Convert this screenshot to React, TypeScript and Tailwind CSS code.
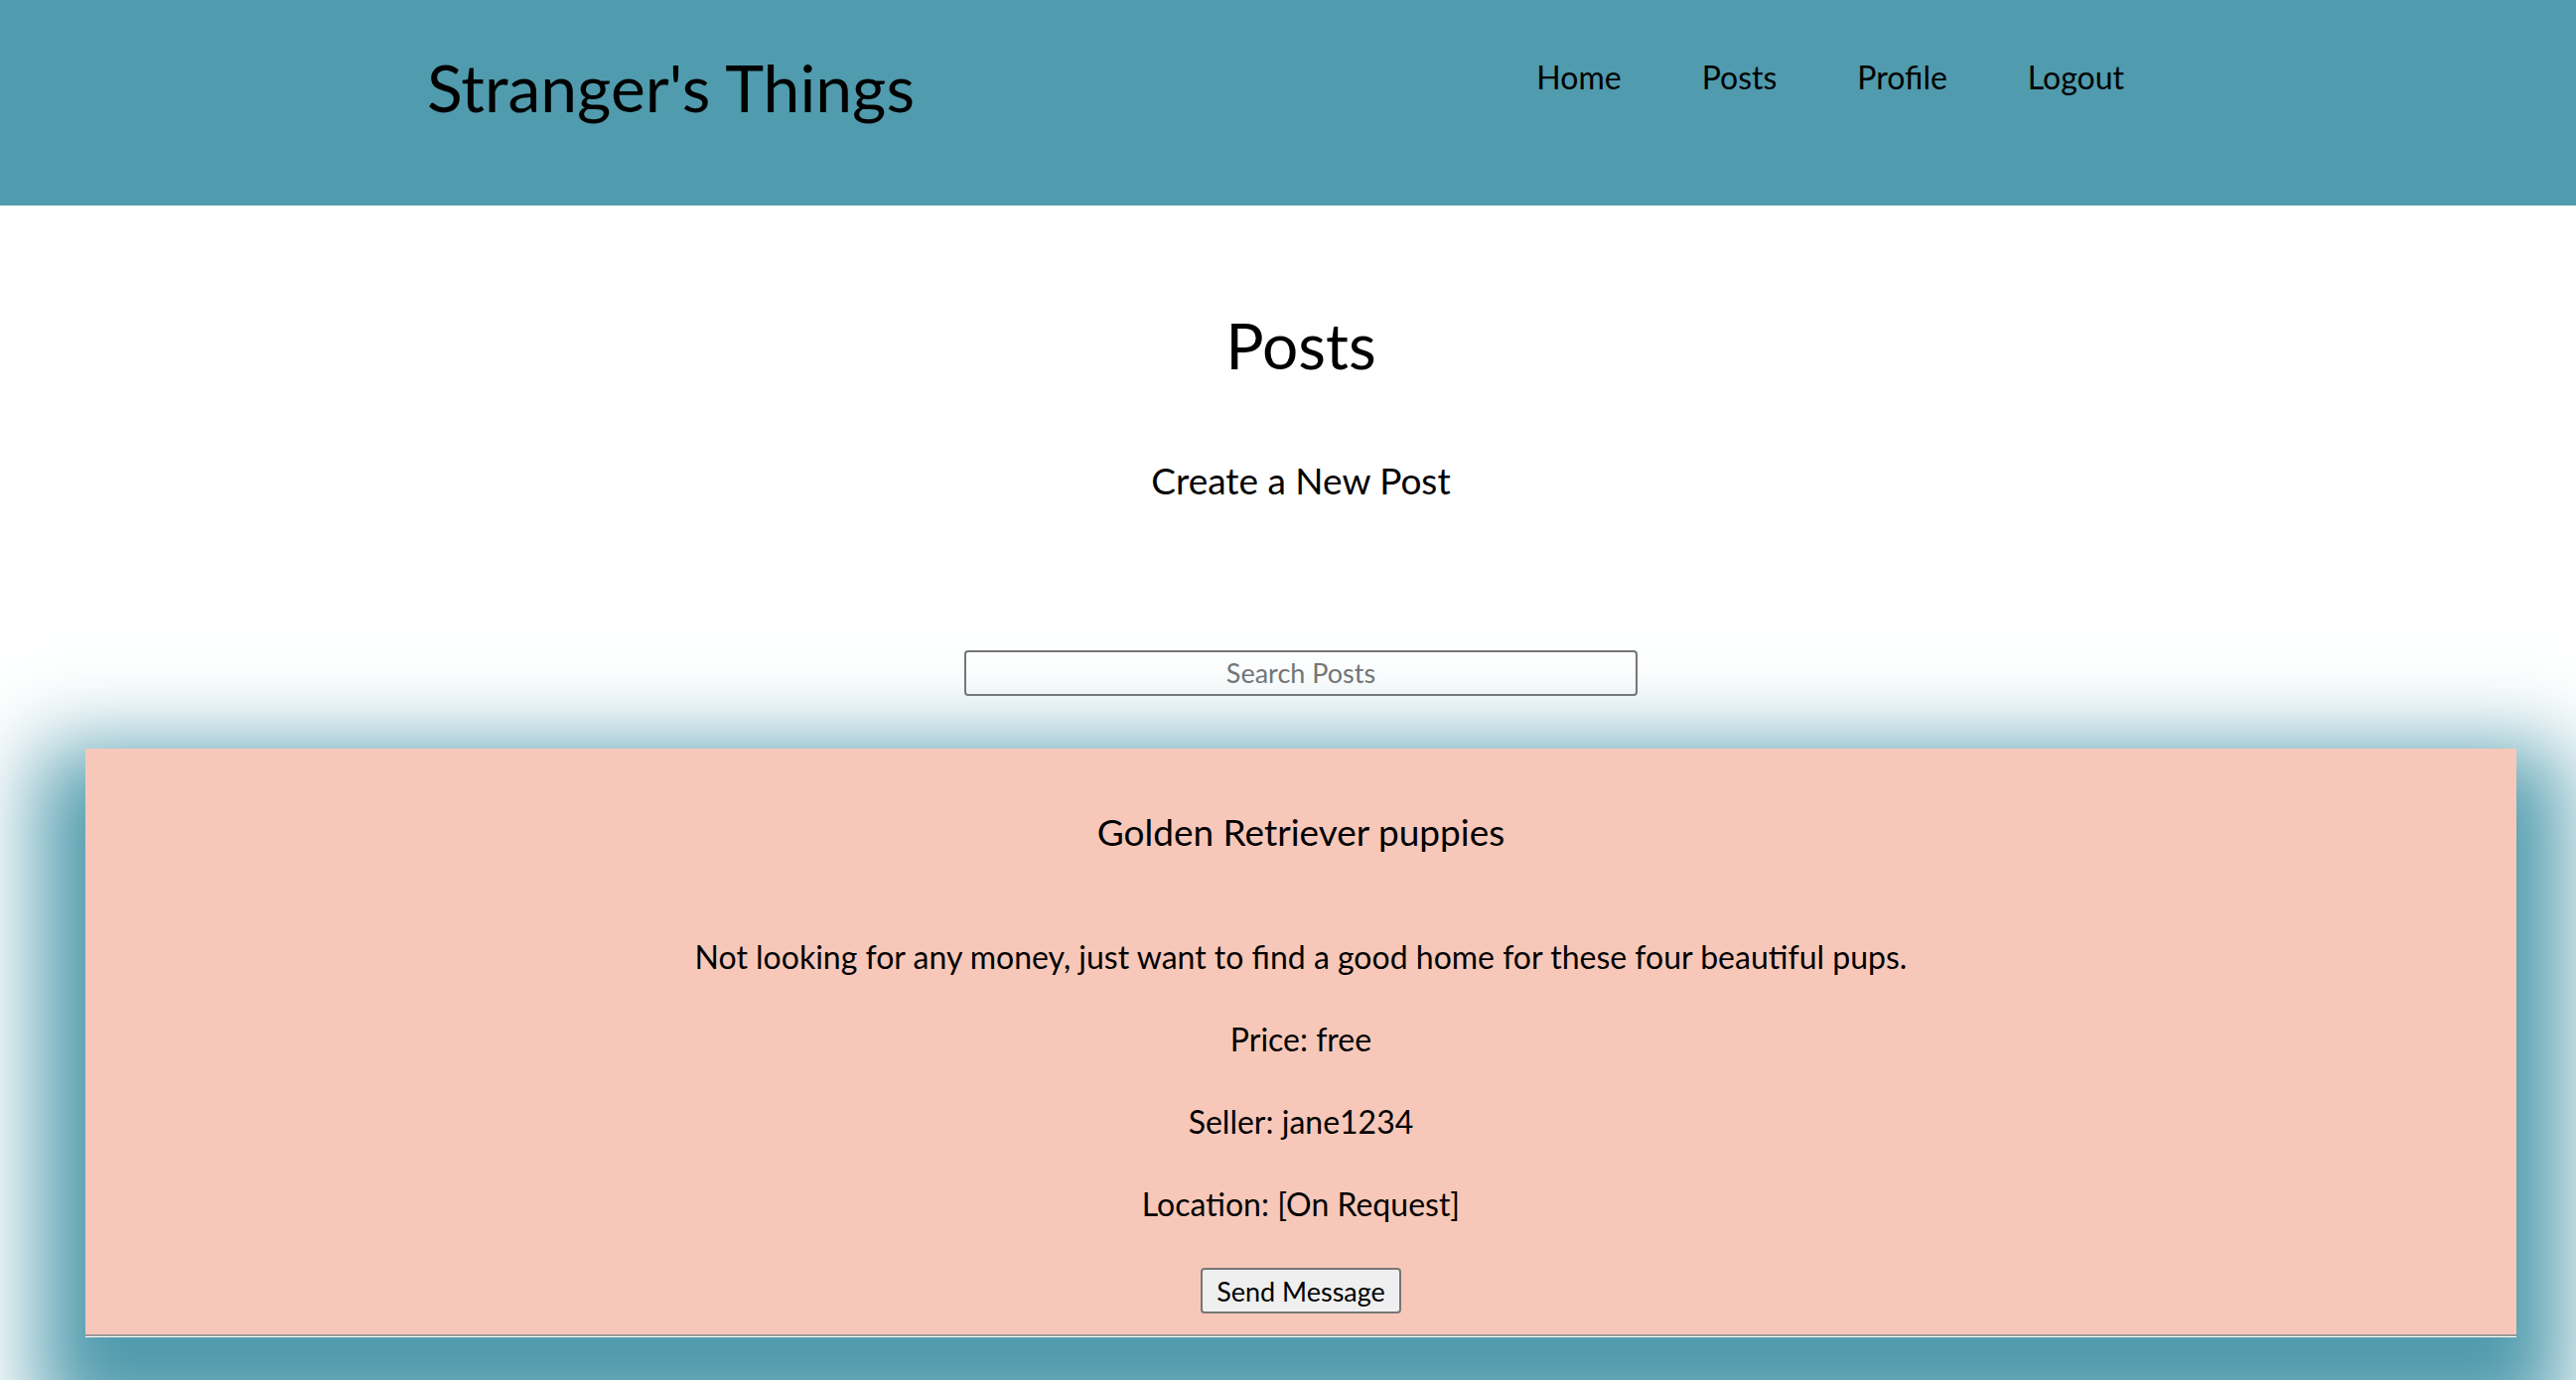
const NAV = ["Home", "Posts", "Profile", "Logout"];

const post = {
  title: "Golden Retriever puppies",
  description:
    "Not looking for any money, just want to find a good home for these four beautiful pups.",
  price: "free",
  seller: "jane1234",
  location: "[On Request]",
};

function Header() {
  return (
    <header className="h-[207px] bg-[#509bad] flex justify-between items-start pl-[430px] pr-[455px]">
      <h1 className="mt-[55px] text-[66px] leading-none font-normal">Stranger's Things</h1>
      <nav className="mt-[62px] flex gap-[81px] text-[32px] leading-none">
        {NAV.map((label) => (
          <a key={label} href="#" className="text-black">
            {label}
          </a>
        ))}
      </nav>
    </header>
  );
}

function PostCard() {
  return (
    <div className="mt-[53px] w-[2448px] bg-[#f7c8b9] shadow-[0_48px_80px_48px_#509bad] flex flex-col items-center pt-[65px]">
      <h3 className="text-[37px] leading-none font-normal">{post.title}</h3>
      <div className="mt-[92px] flex flex-col items-center gap-[51px] text-[32px] leading-none">
        <p>{post.description}</p>
        <p>Price: {post.price}</p>
        <p>Seller: {post.seller}</p>
        <p>Location: {post.location}</p>
      </div>
      <button className="mt-[48px] h-[46px] px-[14px] bg-[#efefef] border-2 border-[#767676] rounded-[4px] text-[27px] leading-none">
        Send Message
      </button>
      <div className="self-stretch mt-[21px] border-t-2 border-t-[#9a9a9a] border-b border-b-white" />
    </div>
  );
}

export default function App() {
  return (
    <div className="min-h-screen bg-white text-black font-['Lato','Liberation_Sans',sans-serif]">
      <Header />
      <main className="pl-[26px] flex flex-col items-center text-center">
        <h2 className="mt-[109px] text-[64px] leading-none font-normal">Posts</h2>
        <h3 className="mt-[85px] text-[37px] leading-none font-normal">Create a New Post</h3>
        <input
          type="text"
          placeholder="Search Posts"
          className="mt-[153px] w-[678px] h-[46px] pb-[2px] border-2 border-[#767676] rounded-[4px] bg-transparent text-center text-[27px] placeholder:text-[#757575] outline-none"
        />
        <PostCard />
      </main>
    </div>
  );
}
